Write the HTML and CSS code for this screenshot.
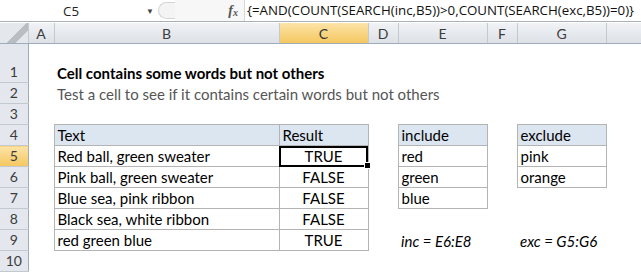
FILE: index.html
```html
<!DOCTYPE html>
<html lang="en">
<head>
    <meta charset="UTF-8">
    <title>Cell contains some words but not others</title>
    <link rel="stylesheet" href="styles.css">
</head>
<body>
    <div class="formula-bar">
        <div class="name-box">
            <span class="cell-ref">C5</span>
            <span class="drop">&#9660;</span>
        </div>
        <div class="splitter"></div>
        <div class="fx-area"><span class="fx">f<sub>x</sub></span></div>
        <div class="formula">{=AND(COUNT(SEARCH(inc,B5))&gt;0,COUNT(SEARCH(exc,B5))=0)}</div>
    </div>

    <table class="sheet">
        <colgroup>
            <col class="w-rh">
            <col class="w-a">
            <col class="w-b">
            <col class="w-c">
            <col class="w-d">
            <col class="w-e">
            <col class="w-f">
            <col class="w-g">
            <col class="w-h">
        </colgroup>
        <tr class="col-head">
            <th class="corner"></th>
            <th>A</th>
            <th>B</th>
            <th class="active">C</th>
            <th>D</th>
            <th>E</th>
            <th>F</th>
            <th>G</th>
            <th></th>
        </tr>
        <tr class="row-tall">
            <td class="rh">1</td>
            <td></td>
            <td class="title" colspan="3">Cell contains some words but not others</td>
            <td></td><td></td><td></td><td></td>
        </tr>
        <tr>
            <td class="rh">2</td>
            <td></td>
            <td class="subtitle" colspan="4">Test a cell to see if it contains certain words but not others</td>
            <td></td><td></td><td></td>
        </tr>
        <tr>
            <td class="rh">3</td>
            <td></td><td></td><td></td><td></td><td></td><td></td><td></td><td></td>
        </tr>
        <tr>
            <td class="rh">4</td>
            <td></td>
            <td class="bd hd">Text</td>
            <td class="bd hd">Result</td>
            <td></td>
            <td class="bd hd">include</td>
            <td></td>
            <td class="bd hd">exclude</td>
            <td></td>
        </tr>
        <tr>
            <td class="rh active">5</td>
            <td></td>
            <td class="bd">Red ball, green sweater</td>
            <td class="bd mid selected">TRUE<span class="handle"></span></td>
            <td></td>
            <td class="bd">red</td>
            <td></td>
            <td class="bd">pink</td>
            <td></td>
        </tr>
        <tr>
            <td class="rh">6</td>
            <td></td>
            <td class="bd">Pink ball, green sweater</td>
            <td class="bd mid">FALSE</td>
            <td></td>
            <td class="bd">green</td>
            <td></td>
            <td class="bd">orange</td>
            <td></td>
        </tr>
        <tr>
            <td class="rh">7</td>
            <td></td>
            <td class="bd">Blue sea, pink ribbon</td>
            <td class="bd mid">FALSE</td>
            <td></td>
            <td class="bd">blue</td>
            <td></td><td></td><td></td>
        </tr>
        <tr>
            <td class="rh">8</td>
            <td></td>
            <td class="bd">Black sea, white ribbon</td>
            <td class="bd mid">FALSE</td>
            <td></td><td></td><td></td><td></td><td></td>
        </tr>
        <tr>
            <td class="rh">9</td>
            <td></td>
            <td class="bd">red green blue</td>
            <td class="bd mid">TRUE</td>
            <td></td>
            <td class="note" colspan="2">inc = E6:E8</td>
            <td class="note" colspan="2">exc = G5:G6</td>
        </tr>
        <tr>
            <td class="rh">10</td>
            <td></td><td></td><td></td><td></td><td></td><td></td><td></td><td></td>
        </tr>
    </table>
</body>
</html>
```

FILE: styles.css
```css
body {
    margin: 0;
    background: #ffffff;
    font-family: Lato, "Liberation Sans", sans-serif;
    color: #000;
    overflow: hidden;
}

/* formula bar */
.formula-bar {
    display: flex;
    height: 21px;
    border-bottom: 1px solid #a9b0b8;
    font-family: "Open Sans", "Liberation Sans", sans-serif;
    font-size: 13.3px;
}

.name-box {
    width: 158px;
    display: flex;
    align-items: center;
}

.cell-ref {
    margin-left: 63px;
    color: #222;
}

.drop {
    margin-left: auto;
    margin-right: 4px;
    font-size: 8px;
    color: #444;
}

.splitter {
    width: 16px;
    margin: 2px 0;
    border: 1px solid #d4d4d4;
    border-right: none;
    border-radius: 10px 0 0 10px;
    background: #f4f4f4;
}

.fx-area {
    width: 63px;
    background: #f7f7f7;
    display: flex;
    align-items: center;
    justify-content: flex-end;
    padding-right: 6px;
    border-right: 1px solid #d6d6d6;
}

.fx {
    font-family: "Liberation Serif", serif;
    font-style: italic;
    font-weight: bold;
    font-size: 14px;
    color: #555;
}

.fx sub {
    font-size: 10px;
    vertical-align: -1px;
}

.formula {
    padding-left: 2px;
    line-height: 21px;
    color: #111;
    white-space: nowrap;
}

/* grid */
.sheet {
    margin-top: 1px;
    border-collapse: collapse;
    table-layout: fixed;
    width: 641px;
    font-size: 15px;
}

.w-rh { width: 28px; }
.w-a { width: 26px; }
.w-b { width: 225px; }
.w-c { width: 89px; }
.w-d { width: 30px; }
.w-e { width: 89px; }
.w-f { width: 30px; }
.w-g { width: 89px; }
.w-h { width: 35px; }

.sheet td {
    height: 19px;
    padding: 0 0 1px 3px;
    vertical-align: bottom;
    white-space: nowrap;
    overflow: visible;
    line-height: 18px;
}

.col-head th {
    height: 20px;
    padding: 0;
    font-weight: normal;
    font-size: 14px;
    color: #3c3c3c;
    background: linear-gradient(#f0f2f5, #dde1e7);
    border-right: 1px solid #c4c9d0;
    border-bottom: 1px solid #9eabb9;
}

.col-head th.active {
    background: linear-gradient(#fbe3a6, #f5c760);
    color: #333;
}

.corner {
    background: linear-gradient(135deg, #e4e7eb 55%, #b9bec5 55%, #b9bec5 75%, #e4e7eb 75%) !important;
}

.sheet td.rh {
    padding: 0 0 1px 0;
    text-align: center;
    font-size: 14px;
    color: #3c3c3c;
    background: #e4e8ee;
    border-bottom: 1px solid #c4c9d0;
    border-right: 1px solid #9eabb9;
}

.sheet td.rh.active {
    background: linear-gradient(#fbe3a6, #f5c760);
}

.sheet tr.row-tall td {
    height: 37px;
}

.title {
    font-weight: bold;
}

.subtitle {
    color: #555;
}

.bd {
    border: 1px solid #b4b4b4;
}

.hd {
    background: #dce6f1;
}

.mid {
    text-align: center;
}

.sheet td.mid {
    padding-left: 0;
}

.selected {
    position: relative;
    outline: 2px solid #000;
    outline-offset: -2px;
}

.handle {
    position: absolute;
    right: -3px;
    bottom: -3px;
    width: 5px;
    height: 5px;
    background: #000;
    border: 1px solid #fff;
}

.note {
    font-style: italic;
}
```
